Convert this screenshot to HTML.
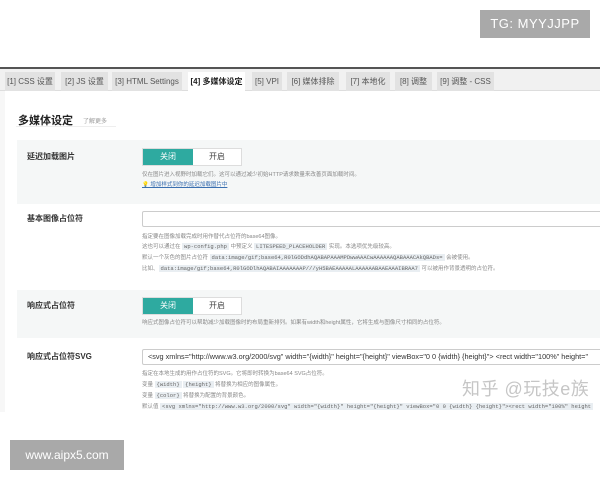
<!DOCTYPE html>
<html><head><meta charset="utf-8"><style>
*{margin:0;padding:0;box-sizing:border-box}
body{width:600px;height:480px;background:#fff;font-family:"Liberation Sans","Noto Sans CJK SC",sans-serif;position:relative;overflow:hidden;color:#333}
.tg{position:absolute;left:480px;top:10px;width:110px;height:28px;background:#a9a9a9;color:#fff;font-size:13px;line-height:28px;text-align:center;letter-spacing:.5px}
.line{position:absolute;left:0;top:67px;width:600px;height:2px;background:#555}
.tabbar{position:absolute;left:0;top:69px;width:600px;height:22px;background:#f1f1f1;border-bottom:1px solid #ddd}
.tab{position:absolute;top:3px;height:19px;background:#e2e2e2;font-size:8px;line-height:19px;text-align:center;color:#555}
.tab.on{background:#fff;color:#222;font-weight:bold;height:20px}
.main{position:absolute;left:0;top:91px;width:600px;height:321px;background:#f7f7f7}
.inner{position:absolute;left:5px;top:0;width:595px;height:321px;background:#fff}
h2{position:absolute;left:18px;top:112px;font-size:11px;font-weight:bold;color:#222}
.more{position:absolute;left:83px;top:116px;font-size:6px;color:#999}
.hl{position:absolute;left:16px;top:126px;width:100px;height:1px;background:#eee}
.row{position:absolute;left:17px;width:583px}
.gray{background:#f5f7f7}
.lbl{position:absolute;left:27px;font-size:8px;font-weight:bold;color:#333}
.sw{position:absolute;left:142px;width:100px;height:18px;border:1px solid #ddd;background:#fff;font-size:8px}
.sw .off{position:absolute;left:0;top:0;width:50px;height:16px;background:#2eaaa0;color:#fff;text-align:center;line-height:16px}
.sw .onb{position:absolute;left:50px;top:0;width:48px;height:16px;text-align:center;line-height:16px;color:#444}
.d{position:absolute;left:142px;font-size:5.5px;color:#888;white-space:nowrap;line-height:10px}
code{background:#e9eef2;color:#666;font-family:"Liberation Mono",monospace;padding:0 2px;font-size:5.5px}
.inp{position:absolute;left:142px;width:470px;height:16px;border:1px solid #ccc;background:#fff;border-radius:2px;font-size:7.3px;line-height:14px;padding-left:5px;white-space:nowrap;overflow:hidden;color:#333}
.wm{position:absolute;left:462px;top:375px;font-size:18px;color:#c6c6c6;letter-spacing:.5px;white-space:nowrap}
.www{position:absolute;left:10px;top:440px;width:114px;height:30px;background:#a9a9a9;color:#fff;font-size:12px;line-height:30px;text-align:center}
</style></head><body>
<div class="tg">TG: MYYJJPP</div>
<div class="line"></div>
<div class="tabbar">
<div class="tab" style="left:5px;width:50px">[1] CSS 设置</div>
<div class="tab" style="left:61px;width:47px">[2] JS 设置</div>
<div class="tab" style="left:112px;width:70px">[3] HTML Settings</div>
<div class="tab on" style="left:188px;width:57px">[4] 多媒体设定</div>
<div class="tab" style="left:252px;width:30px">[5] VPI</div>
<div class="tab" style="left:287px;width:52px">[6] 媒体排除</div>
<div class="tab" style="left:346px;width:44px">[7] 本地化</div>
<div class="tab" style="left:395px;width:37px">[8] 调整</div>
<div class="tab" style="left:437px;width:57px">[9] 调整 - CSS</div>
</div>
<div class="main"><div class="inner"></div></div>
<h2>多媒体设定</h2><div class="more">了解更多</div><div class="hl"></div>

<div class="row gray" style="top:140px;height:64px"></div>
<div class="lbl" style="top:151px">延迟加载图片</div>
<div class="sw" style="top:148px"><div class="off">关闭</div><div class="onb">开启</div></div>
<div class="d" style="top:170px">仅在图片进入视野时加载它们。这可以通过减少初始HTTP请求数量来改善页面加载时间。</div>
<div class="d" style="top:180px;color:#3a6fb0;text-decoration:underline">💡 增加样式到你的延迟加载图片中</div>

<div class="lbl" style="top:213px">基本图像占位符</div>
<div class="inp" style="top:211px"></div>
<div class="d" style="top:232px">指定要在图像加载完成时用作替代占位符的base64图像。</div>
<div class="d" style="top:242px">这也可以通过在 <code>wp-config.php</code> 中预定义 <code>LITESPEED_PLACEHOLDER</code> 实现。本选项优先级较高。</div>
<div class="d" style="top:253px">默认一个灰色的图片占位符 <code>data:image/gif;base64,R0lGODdhAQABAPAAAMPDwwAAACwAAAAAAQABAAACAkQBADs=</code> 会被使用。</div>
<div class="d" style="top:264px">比如、<code>data:image/gif;base64,R0lGODlhAQABAIAAAAAAAP///yH5BAEAAAAALAAAAAABAAEAAAIBRAA7</code> 可以被用作背景透明的占位符。</div>

<div class="row gray" style="top:290px;height:48px"></div>
<div class="lbl" style="top:300px">响应式占位符</div>
<div class="sw" style="top:297px"><div class="off">关闭</div><div class="onb">开启</div></div>
<div class="d" style="top:318px">响应式图像占位符可以帮助减少加载图像时的布局重新排列。如果有width和height属性，它将生成与图像尺寸相同的占位符。</div>

<div class="lbl" style="top:351px;font-weight:bold">响应式占位符SVG</div>
<div class="inp" style="top:349px">&lt;svg xmlns="http://www.w3.org/2000/svg" width="{width}" height="{height}" viewBox="0 0 {width} {height}"&gt; &lt;rect width="100%" height="</div>
<div class="d" style="top:369px">指定在本地生成的用作占位符的SVG。它将即时转换为base64 SVG占位符。</div>
<div class="d" style="top:380px">变量 <code>{width}</code> <code>{height}</code> 将替换为相应的图像属性。</div>
<div class="d" style="top:391px">变量 <code>{color}</code> 将替换为配置的背景颜色。</div>
<div class="d" style="top:402px;height:10px;overflow:hidden">默认值 <code>&lt;svg xmlns="http://www.w3.org/2000/svg" width="{width}" height="{height}" viewBox="0 0 {width} {height}"&gt;&lt;rect width="100%" height</code></div>
<div class="wm">知乎 @玩技e族</div>
<div style="position:absolute;left:0;top:412px;width:600px;height:68px;background:#fff"></div>
<div class="www">www.aipx5.com</div>
</body></html>
